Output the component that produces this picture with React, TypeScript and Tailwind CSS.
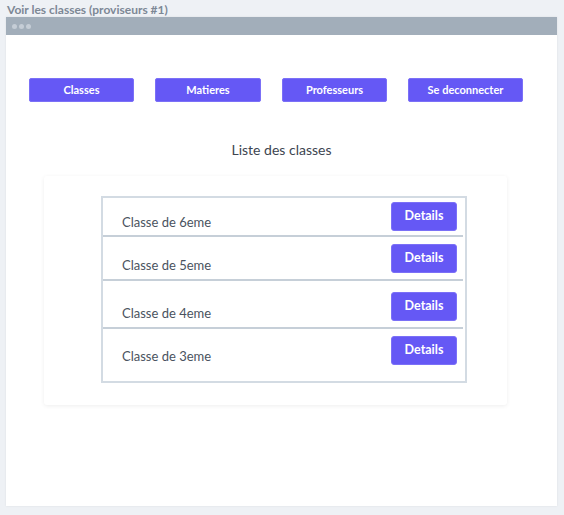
const nav = [
  { label: "Classes", w: "w-[105px]" },
  { label: "Matieres", w: "w-[106px]" },
  { label: "Professeurs", w: "w-[105px]" },
  { label: "Se deconnecter", w: "w-[115px]" },
];

const rows = [
  { name: "Classe de 6eme", h: "h-[37px]", btn: "mt-[4px]", txt: "mt-[16px]" },
  { name: "Classe de 5eme", h: "h-[42px]", btn: "mt-[7px]", txt: "mt-[20px]" },
  { name: "Classe de 4eme", h: "h-[46px]", btn: "mt-[11px]", txt: "mt-[24px]" },
  { name: "Classe de 3eme", h: "h-[51px]", btn: "mt-[7px]", txt: "mt-[19px]" },
];

export default function App() {
  return (
    <div className="w-[564px] h-[515px] bg-[#eef1f5] px-[6px] pt-[3px] font-['Lato',sans-serif]">
      <p className="text-[12px] leading-[14px] font-bold text-[#7d8895] pl-[1px]">Voir les classes (proviseurs #1)</p>

      <div className="w-[551px] h-[489px] bg-white shadow-[0_0_2px_rgba(0,0,0,0.08)]">
        <div className="h-[18px] bg-[#a2aeba] flex items-center gap-[2px] pl-[6px]">
          <span className="w-[5px] h-[5px] rounded-full bg-[#c5cdd6]" />
          <span className="w-[5px] h-[5px] rounded-full bg-[#c5cdd6]" />
          <span className="w-[5px] h-[5px] rounded-full bg-[#c5cdd6]" />
        </div>

        <div className="flex gap-[21px] ml-[23px] mt-[43px]">
          {nav.map((b) => (
            <button
              key={b.label}
              className={`${b.w} h-[24px] rounded-[2px] bg-[#6558f5] border border-[#7b70f7] text-white text-[11px] font-bold`}
            >
              {b.label}
            </button>
          ))}
        </div>

        <h2 className="mt-[40px] text-center text-[14px] leading-[16px] text-[#3d4550]">Liste des classes</h2>

        <div className="ml-[38px] mt-[18px] w-[463px] h-[229px] bg-white rounded-[3px] shadow-[0_1px_4px_rgba(0,0,0,0.07)] pt-[20px]">
          <div className="ml-[57px] w-[366px] h-[187px] border-2 border-[#d3dbe3]">
            {rows.map((r, i) => (
              <div key={r.name}>
                <div className={`${r.h} flex items-start justify-between pl-[19px] pr-[8px]`}>
                  <span className={`${r.txt} text-[13px] leading-[17px] text-[#4a5360]`}>{r.name}</span>
                  <button className={`${r.btn} w-[66px] h-[29px] rounded-[3px] bg-[#6558f5] border border-[#7b70f7] text-white text-[12.5px] font-bold`}>
                    Details
                  </button>
                </div>
                {i < rows.length - 1 && <div className="h-[2px] bg-[#c6cfd8] mr-[2px]" />}
              </div>
            ))}
          </div>
        </div>
      </div>
    </div>
  );
}
